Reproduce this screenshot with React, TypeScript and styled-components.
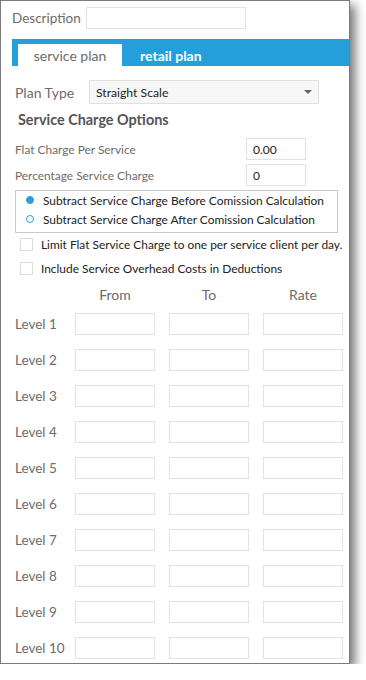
import { Fragment } from "react";
import styled, { createGlobalStyle } from "styled-components";

const GlobalStyle = createGlobalStyle`
  body {
    margin: 0;
    background: #ffffff;
    font-family: "Lato", "Open Sans", sans-serif;
  }
`;

const Panel = styled.div`
  box-sizing: border-box;
  width: 350px;
  height: 664px;
  border: 1px solid #7b7b7b;
  background: #ffffff;
  box-shadow: 5px 5px 10px rgba(0, 0, 0, 0.55);
  overflow: hidden;
`;

const DescRow = styled.div`
  display: flex;
  align-items: center;
  gap: 5px;
  margin: 6px 0 0 11px;
`;

const Label = styled.span<{ $size?: number; $w?: number }>`
  font-size: ${(p) => p.$size || 11.9}px;
  color: #6e6b68;
  white-space: nowrap;
  ${(p) => (p.$w ? `width: ${p.$w}px; flex-shrink: 0;` : "")}
`;

const TextBox = styled.div<{ $w: number; $h?: number }>`
  box-sizing: border-box;
  width: ${(p) => p.$w}px;
  height: ${(p) => p.$h || 22}px;
  border: 1px solid #e2e2e2;
  background: #ffffff;
  font-size: 12px;
  color: #222;
  padding-left: 6px;
  display: flex;
  align-items: center;
`;

const TabBar = styled.div`
  margin: 10px 0 0 11px;
  height: 27px;
  background: #259fd9;
  display: flex;
  align-items: flex-end;
  padding-left: 6px;
`;

const Tab = styled.div<{ $active?: boolean }>`
  height: 22px;
  width: ${(p) => (p.$active ? "104px" : "auto")};
  padding-left: ${(p) => (p.$active ? 0 : 18)}px;
  display: flex;
  align-items: center;
  justify-content: ${(p) => (p.$active ? "center" : "flex-start")};
  font-size: 14px;
  background: ${(p) => (p.$active ? "#ffffff" : "transparent")};
  color: ${(p) => (p.$active ? "#6e6b68" : "#ffffff")};
  font-weight: ${(p) => (p.$active ? 400 : 700)};
`;

const Content = styled.div`
  padding: 14px 0 0 14px;
`;

const PlanRow = styled.div`
  display: flex;
  align-items: center;
`;

const Select = styled.div`
  box-sizing: border-box;
  width: 230px;
  height: 24px;
  border: 1px solid #e0e0e0;
  background: #f7f7f7;
  display: flex;
  align-items: center;
  justify-content: space-between;
  padding: 0 6px 0 6px;
  font-size: 12.2px;
  color: #222;
`;

const Caret = styled.span`
  width: 0;
  height: 0;
  border-left: 4px solid transparent;
  border-right: 4px solid transparent;
  border-top: 4px solid #666;
`;

const SectionTitle = styled.div`
  margin: 7px 0 0 3px;
  height: 18px;
  line-height: 18px;
  font-size: 14.4px;
  font-weight: 700;
  color: #555;
`;

const ChargeRow = styled.div<{ $top: number }>`
  display: flex;
  align-items: center;
  justify-content: space-between;
  width: 291px;
  margin-top: ${(p) => p.$top}px;
`;

const RadioBox = styled.div`
  box-sizing: border-box;
  width: 323px;
  height: 43px;
  margin-top: 4px;
  border: 1px solid #c9c9c9;
  padding: 1px 0 0 9px;
  display: flex;
  flex-direction: column;
  gap: 3px;
`;

const OptionRow = styled.div`
  display: flex;
  align-items: center;
  gap: 9px;
  font-size: 11.9px;
  color: #222;
  height: 16px;
  white-space: nowrap;
`;

const Radio = styled.span<{ $checked?: boolean }>`
  box-sizing: border-box;
  width: 8px;
  height: 8px;
  border-radius: 50%;
  border: 1.5px solid #2a9ddc;
  background: ${(p) => (p.$checked ? "#2a9ddc" : "#ffffff")};
  margin-left: 1px;
  flex-shrink: 0;
`;

const CheckRow = styled.div<{ $top: number }>`
  display: flex;
  align-items: center;
  gap: 8px;
  height: 13px;
  margin: ${(p) => p.$top}px 0 0 5px;
  font-size: 11.9px;
  color: #222;
  white-space: nowrap;
`;

const CheckBox = styled.span`
  box-sizing: border-box;
  width: 13px;
  height: 13px;
  border: 1px solid #dcdcdc;
  background: #fff;
  flex-shrink: 0;
`;

const LevelTable = styled.div`
  display: flex;
  flex-direction: column;
  gap: 14px;
`;

const GridRow = styled.div<{ $top?: number }>`
  display: grid;
  grid-template-columns: 46px 80px 80px 80px;
  column-gap: 14px;
  align-items: center;
  margin-top: ${(p) => p.$top || 0}px;
`;

const ColHead = styled.div`
  font-size: 14px;
  color: #6e6b68;
  text-align: center;
  height: 16px;
  line-height: 16px;
`;

const LevelLabel = styled.div`
  font-size: 13.5px;
  color: #6e6b68;
  white-space: nowrap;
`;

const levels = Array.from({ length: 10 }, (_, i) => i + 1);

export default function App() {
  return (
    <>
      <GlobalStyle />
      <Panel>
        <DescRow>
          <Label $size={13.5}>Description</Label>
          <TextBox $w={160} />
        </DescRow>
        <TabBar>
          <Tab $active>service plan</Tab>
          <Tab>retail plan</Tab>
        </TabBar>
        <Content>
          <PlanRow>
            <Label $size={14} $w={74}>
              Plan Type
            </Label>
            <Select>
              <span>Straight Scale</span>
              <Caret />
            </Select>
          </PlanRow>
          <SectionTitle>Service Charge Options</SectionTitle>
          <ChargeRow $top={9}>
            <Label>Flat Charge Per Service</Label>
            <TextBox $w={60}>0.00</TextBox>
          </ChargeRow>
          <ChargeRow $top={4}>
            <Label>Percentage Service Charge</Label>
            <TextBox $w={60}>0</TextBox>
          </ChargeRow>
          <RadioBox>
            <OptionRow>
              <Radio $checked />
              Subtract Service Charge Before Comission Calculation
            </OptionRow>
            <OptionRow>
              <Radio />
              Subtract Service Charge After Comission Calculation
            </OptionRow>
          </RadioBox>
          <CheckRow $top={5}>
            <CheckBox />
            Limit Flat Service Charge to one per service client per day.
          </CheckRow>
          <CheckRow $top={11}>
            <CheckBox />
            Include Service Overhead Costs in Deductions
          </CheckRow>
          <GridRow $top={12}>
            <div />
            <ColHead>From</ColHead>
            <ColHead>To</ColHead>
            <ColHead>Rate</ColHead>
          </GridRow>
          <LevelTable style={{ marginTop: 10 }}>
            {levels.map((n) => (
              <GridRow key={n}>
                <LevelLabel>Level {n}</LevelLabel>
                <TextBox $w={80} />
                <TextBox $w={80} />
                <TextBox $w={80} />
              </GridRow>
            ))}
          </LevelTable>
        </Content>
      </Panel>
    </>
  );
}
